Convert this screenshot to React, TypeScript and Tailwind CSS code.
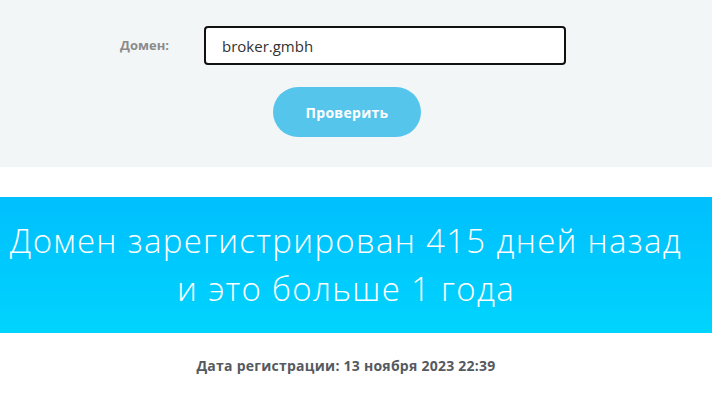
import React, { useState } from 'react';

const App: React.FC = () => {
  const [domain, setDomain] = useState('broker.gmbh');

  return (
    <div className="min-h-[393px] bg-white font-['Open_Sans',sans-serif]">
      {/* Form */}
      <div className="bg-[#f3f6f7] h-[167px] pt-[26px]">
        <div className="flex items-center">
          <label className="w-[204px] pl-[120px] text-[13px] font-bold text-[#8b8b8b]">
            Домен:
          </label>
          <input
            value={domain}
            onChange={(e) => setDomain(e.target.value)}
            className="w-[362px] h-[39px] rounded-[4px] border-2 border-[#111] bg-white px-4 text-[15px] text-[#333] outline-none"
          />
        </div>
        <div className="flex justify-center mt-[22px]">
          <button className="ml-[-18px] w-[148px] h-[50px] rounded-full bg-[#56c5ec] text-[14px] tracking-[0.3px] font-bold text-white">
            Проверить
          </button>
        </div>
      </div>

      {/* Result */}
      <div className="mt-[30px] h-[136px] bg-gradient-to-b from-[#00bffd] to-[#00d4fd] flex flex-col items-center justify-center pr-[20px]">
        <p className="text-[33px] leading-[48px] tracking-[1.3px] font-light text-white text-center">
          Домен зарегистрирован 415 дней назад
        </p>
        <p className="text-[33px] leading-[48px] tracking-[1.3px] font-light text-white text-center">
          и это больше 1 года
        </p>
      </div>

      <div className="pt-[22px] text-center text-[14px] tracking-[0.25px] font-bold text-[#555a60] pr-[20px]">
        Дата регистрации: 13 ноября 2023 22:39
      </div>
    </div>
  );
};

export default App;
